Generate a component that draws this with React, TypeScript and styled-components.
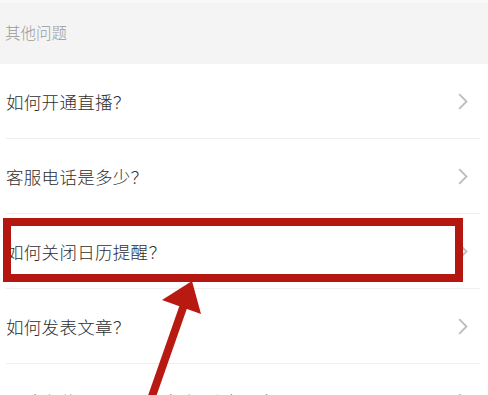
import styled, { createGlobalStyle } from "styled-components";

const GlobalStyle = createGlobalStyle`
    html, body {
        margin: 0;
        padding: 0;
        background-color: #ffffff;
        overflow: hidden;
    }
    body {
        font-family: "Noto Sans CJK SC", "Noto Sans", sans-serif;
    }
`;

const Page = styled.div`
    position: relative;
    width: 488px;
    height: 395px;
    overflow: hidden;
    background-color: #ffffff;
`;

const SectionHeader = styled.div`
    height: 64px;
    display: flex;
    align-items: center;
    padding: 0 0 3px 5px;
    background-color: #f4f4f4;
    border-top: 3px solid #f8f8f8;
    box-sizing: border-box;
    font-size: 15.5px;
    font-weight: 300;
    color: #9a9a9a;
`;

const List = styled.ul`
    list-style: none;
    margin: 0;
    padding: 0;
`;

const Row = styled.li`
    position: relative;
    height: 74px;
    margin: 0 8px 0 6px;
    display: flex;
    align-items: center;
    justify-content: space-between;
    border-bottom: 1px solid #efefef;
`;

const Question = styled.span`
    font-size: 17.5px;
    font-weight: 300;
    color: #2e2e2e;
    letter-spacing: 0.3px;
`;

const Chevron = styled.svg`
    width: 10px;
    height: 17px;
    margin-right: 12px;
    flex-shrink: 0;
`;

// red frame drawn over the highlighted row
const Frame = styled.div`
    position: absolute;
    left: -3px;
    top: 4px;
    width: 460px;
    height: 64px;
    border: 8px solid #b3170f;
    box-sizing: border-box;
`;

const Arrow = styled.svg`
    position: absolute;
    left: 0;
    top: 0;
    pointer-events: none;
`;

const questions = [
    "如何开通直播？",
    "客服电话是多少？",
    "如何关闭日历提醒？",
    "如何发表文章？",
    "评论为什么不显示？如何删除评论？",
];

export default function App() {
    return (
        <>
            <GlobalStyle />
            <Page>
                <SectionHeader>其他问题</SectionHeader>
                <List>
                    {questions.map((q, i) => (
                        <Row key={q}>
                            <Question>{q}</Question>
                            <Chevron viewBox="0 0 10 17">
                                <polyline
                                    points="1.2,1.2 8.5,8.5 1.2,15.8"
                                    fill="none"
                                    stroke="#bdbdbd"
                                    strokeWidth="1.8"
                                />
                            </Chevron>
                            {i === 2 && <Frame />}
                        </Row>
                    ))}
                </List>
                <Arrow width="488" height="395" viewBox="0 0 488 395">
                    <line x1="150" y1="402" x2="185" y2="302" stroke="#b81a12" strokeWidth="8" />
                    <polygon points="192,281 162,300 201,314" fill="#b81a12" />
                </Arrow>
            </Page>
        </>
    );
}
